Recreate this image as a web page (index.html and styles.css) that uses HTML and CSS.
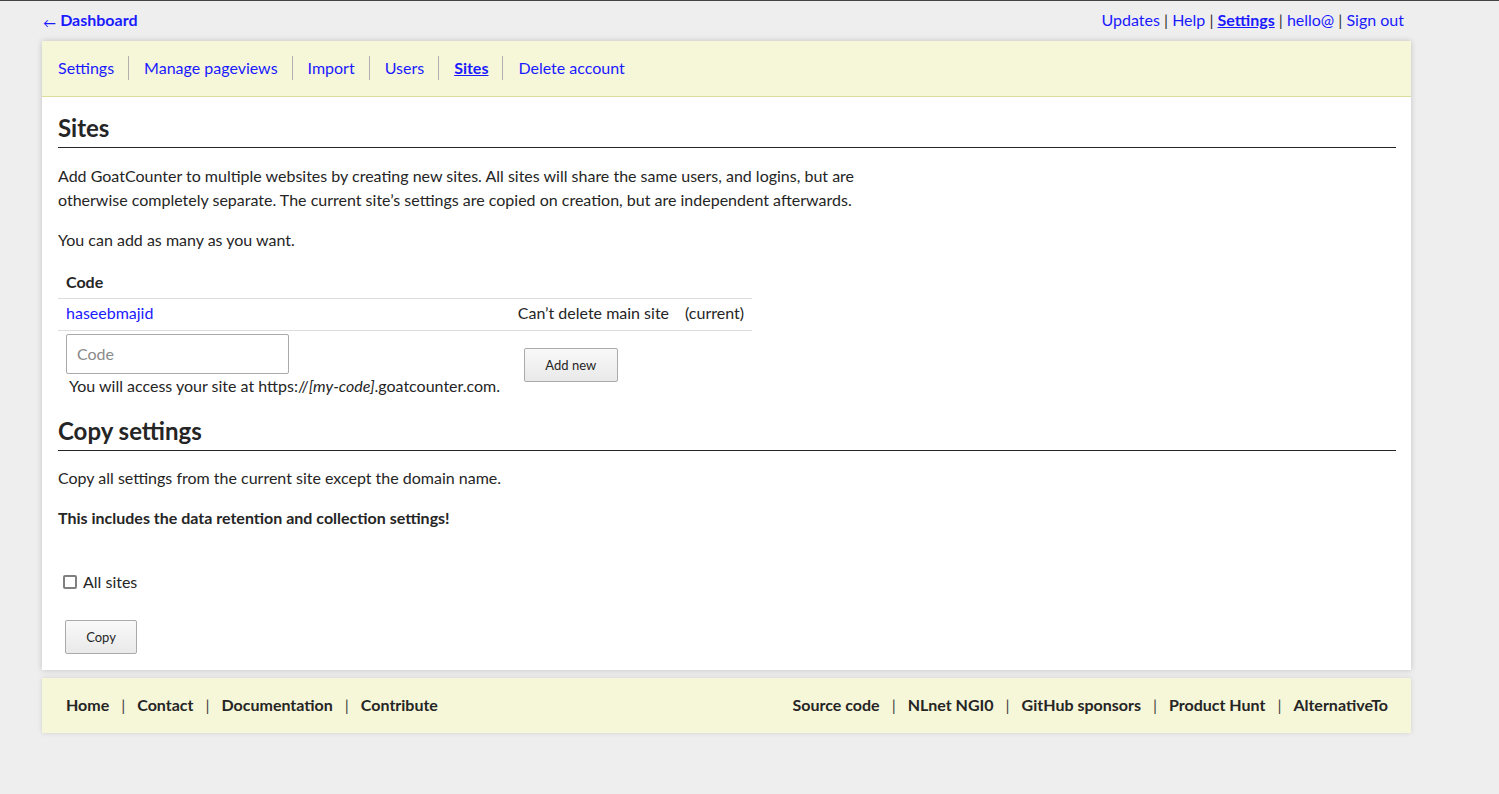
FILE: index.html
```html
<!DOCTYPE html>
<html>
<head>
<meta charset="utf-8">
<link rel="stylesheet" href="styles.css">
</head>
<body>
<header class="top">
  <a class="back" href="#"><span class="arrow">←</span> <b>Dashboard</b></a>
  <div class="usermenu">
    <a href="#">Updates</a> | <a href="#">Help</a> | <a href="#" class="active">Settings</a> | <a href="#">hello@</a> | <a href="#">Sign out</a>
  </div>
</header>
<main class="card">
  <nav class="tabs">
    <a href="#">Settings</a>
    <a href="#">Manage pageviews</a>
    <a href="#">Import</a>
    <a href="#">Users</a>
    <a href="#" class="active">Sites</a>
    <a href="#">Delete account</a>
  </nav>
  <div class="content">
    <h2>Sites</h2>
    <p class="text">Add GoatCounter to multiple websites by creating new sites. All sites will share the same users, and logins, but are otherwise completely separate. The current site’s settings are copied on creation, but are independent afterwards.</p>
    <p class="text">You can add as many as you want.</p>
    <table class="sites">
      <thead>
        <tr><th>Code</th><th></th><th></th></tr>
      </thead>
      <tbody>
        <tr class="row">
          <td class="code-col"><a href="#">haseebmajid</a></td>
          <td>Can’t delete main site</td>
          <td>(current)</td>
        </tr>
        <tr class="add-row">
          <td>
            <input class="field" type="text" placeholder="Code">
            <div class="help">You will access your site at https://<i>[my-code]</i>.goatcounter.com.</div>
          </td>
          <td><button class="btn add-btn">Add new</button></td>
          <td></td>
        </tr>
      </tbody>
    </table>

    <h2 class="copy-h">Copy settings</h2>
    <p class="text">Copy all settings from the current site except the domain name.</p>
    <p class="text"><strong>This includes the data retention and collection settings!</strong></p>
    <label class="check"><span class="box"></span>All sites</label>
    <button class="btn copy-btn">Copy</button>
  </div>
</main>
<footer class="foot">
  <div class="foot-left">
    <a href="#">Home</a><span class="sep">|</span><a href="#">Contact</a><span class="sep">|</span><a href="#">Documentation</a><span class="sep">|</span><a href="#">Contribute</a>
  </div>
  <div class="foot-right">
    <a href="#">Source code</a><span class="sep">|</span><a href="#">NLnet NGI0</a><span class="sep">|</span><a href="#">GitHub sponsors</a><span class="sep">|</span><a href="#">Product Hunt</a><span class="sep">|</span><a href="#">AlternativeTo</a>
  </div>
</footer>
</body>
</html>
```
FILE: styles.css
```css
* { box-sizing: border-box; }
html, body { margin: 0; padding: 0; }
body {
  background: #eeeeee;
  border-top: 1px solid #444;
  font-family: Lato, "Open Sans", sans-serif;
  font-size: 16px;
  color: #252525;
  min-height: 794px;
}
a { color: #1a1aff; text-decoration: none; }

.top {
  display: flex;
  justify-content: space-between;
  align-items: center;
  height: 40px;
  padding: 0 95px 4px 43px;
  font-size: 16px;
}
.back { font-size: 16px; }
.arrow { font-size: 13px; position: relative; top: 2px; }
.back b { font-weight: 700; }
.usermenu { color: #333; }
.usermenu a.active { font-weight: 700; text-decoration: underline; }

.card {
  margin-left: 42px;
  width: 1369px;
  background: #fff;
  box-shadow: 0 0 6px rgba(0,0,0,0.18);
}
.tabs {
  display: flex;
  align-items: center;
  height: 56px;
  padding: 0 16px 1px;
  background: #f6f6d8;
  border-bottom: 1px solid #dcdc9c;
  font-size: 16px;
}
.tabs a {
  padding: 0 14px 0 15px;
  border-left: 1px solid #b0b0b0;
  line-height: 24px;
}
.tabs a:first-child { padding-left: 0; border-left: none; }
.tabs a.active { font-weight: 700; text-decoration: underline; }

.content { padding: 14px 15px 16px 16px; }
h2 {
  margin: 0 0 15.5px;
  font-size: 24px;
  font-weight: 700;
  line-height: 34px;
  padding-bottom: 2px;
  border-bottom: 1px solid #252525;
}
.text {
  max-width: 800px;
  margin: 0 0 16px;
  line-height: 24px;
}

.sites {
  border-collapse: collapse;
  width: 694px;
  margin-top: 15px;
  margin-bottom: 17.5px;
}
.sites th {
  text-align: left;
  font-weight: 700;
  padding: 4px 8px 6px;
  line-height: 20px;
  border-bottom: 1px solid #dddddd;
}
.sites td {
  padding: 3px 8px 7px;
  line-height: 21px;
  vertical-align: middle;
  white-space: nowrap;
}
.sites .row td { border-bottom: 1px solid #dddddd; }
.code-col { width: 452px; }
.add-row td { padding-top: 3px; padding-bottom: 0; vertical-align: middle; }
.field {
  display: block;
  width: 223px;
  height: 40px;
  border: 1px solid #aaa;
  border-radius: 2px;
  padding: 0 10px;
  font-family: Lato, sans-serif;
  font-size: 16px;
  color: #252525;
}
.field::placeholder { color: #8a8a8a; }
.help { padding-left: 3px; margin-top: 1px; line-height: 22px; white-space: nowrap; }

.btn {
  font-family: Lato, sans-serif;
  font-size: 13px;
  color: #252525;
  background: linear-gradient(#f9f9f9, #e9e9e9);
  border: 1px solid #aaa;
  border-radius: 2px;
  height: 34px;
  cursor: pointer;
}
.add-btn { width: 94px; margin-left: 6px; margin-top: 0; }
.copy-h { margin-top: 0; margin-bottom: 15px; }

.check {
  display: flex;
  align-items: center;
  margin: 41.5px 0 0 5px;
  line-height: 20px;
}
.box {
  width: 14px;
  height: 14px;
  border: 2px solid #808080;
  border-radius: 2px;
  margin-right: 6px;
}
.copy-btn { display: block; width: 72px; margin: 28px 0 0 7px; }

.foot {
  margin: 8px 0 0 42px;
  width: 1369px;
  height: 55px;
  background: #f6f6d8;
  box-shadow: 0 0 5px rgba(0,0,0,0.12);
  display: flex;
  justify-content: space-between;
  align-items: center;
  padding: 0 23px 2px 24px;
  font-weight: 700;
  font-size: 16px;
}
.foot a { color: #252525; }
.sep { color: #444; font-weight: 400; margin: 0 12px; }
```
